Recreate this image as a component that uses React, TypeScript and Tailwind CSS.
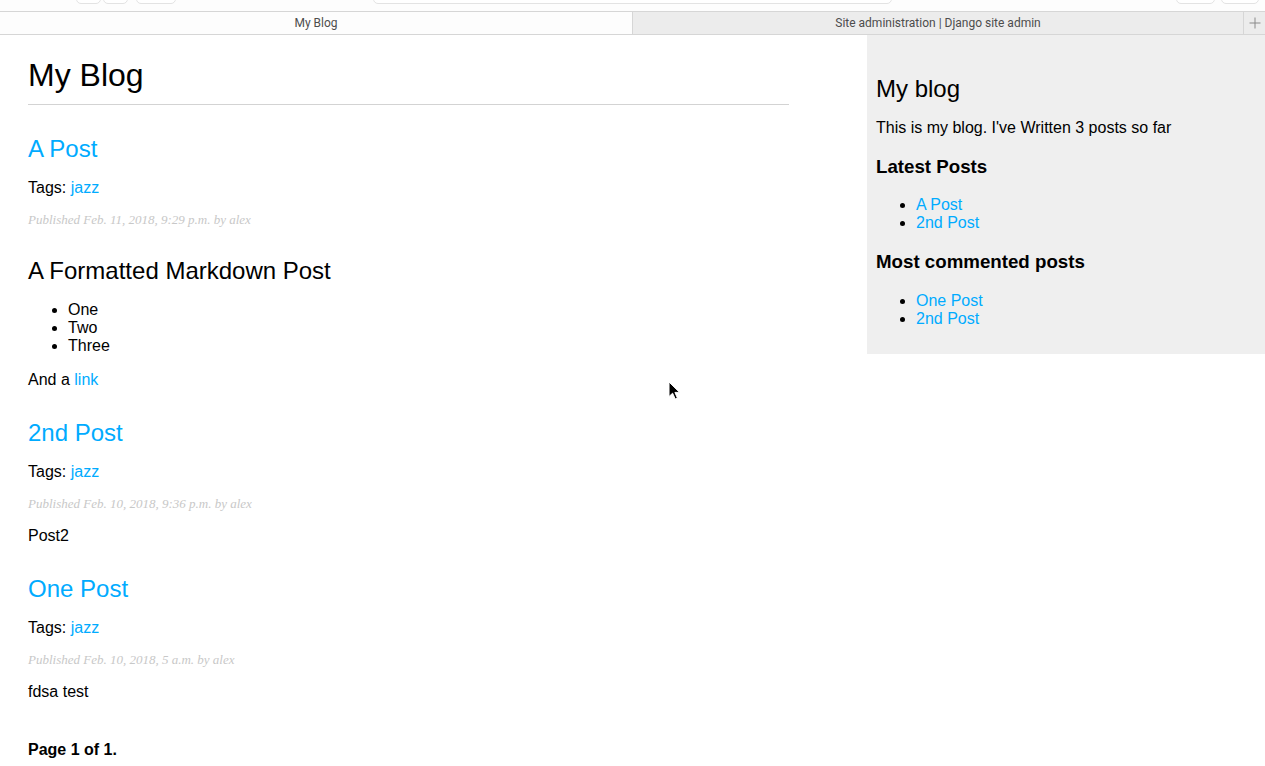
import React from "react";

const sans = { fontFamily: '"Liberation Sans", Arial, sans-serif' };

function Cursor() {
  return (
    <svg
      className="absolute left-[668px] top-[381px]"
      width="14"
      height="20"
      viewBox="0 0 14 20"
    >
      <path
        d="M1 1 L1 15.5 L4.6 12.2 L7.2 18 L9.4 17 L6.9 11.4 L11.6 11.4 Z"
        fill="#000"
        stroke="#fff"
        strokeWidth="1"
        strokeLinejoin="round"
      />
    </svg>
  );
}

function Chrome() {
  return (
    <div className="font-['Roboto',sans-serif]">
      <div className="h-[12px] bg-[#fdfdfd] overflow-hidden flex items-start border-b border-[#d6d6d6]">
        <div className="ml-[76px] -mt-[18px] h-[22px] w-[25px] shrink-0 rounded-[5px] border border-[#e3e3e3] bg-white" />
        <div className="ml-[2px] -mt-[18px] h-[22px] w-[25px] shrink-0 rounded-[5px] border border-[#e3e3e3] bg-white" />
        <div className="ml-[8px] -mt-[18px] h-[22px] w-[40px] shrink-0 rounded-[5px] border border-[#e3e3e3] bg-white" />
        <div className="ml-[197px] -mt-[18px] h-[22px] w-[519px] shrink-0 rounded-[5px] border border-[#e3e3e3] bg-white" />
        <div className="ml-[284px] -mt-[18px] h-[22px] w-[39px] shrink-0 rounded-[5px] border border-[#e3e3e3] bg-white" />
        <div className="ml-[6px] -mt-[18px] h-[22px] w-[38px] shrink-0 rounded-[5px] border border-[#e3e3e3] bg-white" />
      </div>
      <div className="h-[23px] flex border-b border-[#d6d6d6] text-[12px] text-[#4d4d4d]">
        <div className="w-[633px] bg-[#fdfdfd] flex items-center justify-center border-r border-[#d6d6d6]">
          My Blog
        </div>
        <div className="w-[611px] bg-[#ececec] flex items-center justify-center border-r border-[#d6d6d6]">
          Site administration | Django site admin
        </div>
        <div className="flex-1 bg-[#ececec] flex items-center justify-center">
          <svg width="12" height="12" viewBox="0 0 12 12">
            <path d="M6 0.5 V11.5 M0.5 6 H11.5" stroke="#8a8a8a" strokeWidth="1" />
          </svg>
        </div>
      </div>
    </div>
  );
}

function Tags() {
  return (
    <p className="my-4">
      Tags: <a className="text-[#00abff]">jazz</a>
    </p>
  );
}

function DateLine({ text }: { text: string }) {
  return (
    <p className="my-[12px] text-[13px] leading-[14px] italic text-[#c8c8c8] font-['Liberation_Serif',Georgia,serif]">
      {text}
    </p>
  );
}

export default function App() {
  return (
    <div className="relative w-[1265px] h-[766px] overflow-hidden bg-white text-black leading-[normal]" style={sans}>
      <Chrome />
      <div className="flex justify-between items-start">
        <div className="w-[789px] pl-[28px] shrink-0">
          <h1 className="mt-[22px] pb-[10px] border-b border-[#d3d3d3] text-[32px] font-normal">
            My Blog
          </h1>

          <h2 className="mt-[30px] text-[24px] font-normal">
            <a className="text-[#00abff]">A Post</a>
          </h2>
          <Tags />
          <DateLine text="Published Feb. 11, 2018, 9:29 p.m. by alex" />
          <h2 className="mt-[30px] text-[24px] font-normal">A Formatted Markdown Post</h2>
          <ul className="my-4 pl-10 list-disc">
            <li>One</li>
            <li>Two</li>
            <li>Three</li>
          </ul>
          <p className="my-4">
            And a <a className="text-[#00abff]">link</a>
          </p>

          <h2 className="mt-[30px] text-[24px] font-normal">
            <a className="text-[#00abff]">2nd Post</a>
          </h2>
          <Tags />
          <DateLine text="Published Feb. 10, 2018, 9:36 p.m. by alex" />
          <p className="my-4">Post2</p>

          <h2 className="mt-[30px] text-[24px] font-normal">
            <a className="text-[#00abff]">One Post</a>
          </h2>
          <Tags />
          <DateLine text="Published Feb. 10, 2018, 5 a.m. by alex" />
          <p className="my-4">fdsa test</p>

          <div className="mt-[40px] mr-[10px] mb-[10px] font-bold">Page 1 of 1.</div>
        </div>

        <div className="w-[398px] bg-[#efefef] pt-[10px] pb-[10px] pl-[9px] pr-[10px]">
          <h2 className="mt-[30px] text-[24px] font-normal">My blog</h2>
          <p className="my-4">This is my blog. I've Written 3 posts so far</p>
          <h3 className="my-[18.72px] text-[18.72px] font-bold">Latest Posts</h3>
          <ul className="my-4 pl-10 list-disc">
            <li>
              <a className="text-[#00abff]">A Post</a>
            </li>
            <li>
              <a className="text-[#00abff]">2nd Post</a>
            </li>
          </ul>
          <h3 className="my-[18.72px] text-[18.72px] font-bold">Most commented posts</h3>
          <ul className="my-4 pl-10 list-disc">
            <li>
              <a className="text-[#00abff]">One Post</a>
            </li>
            <li>
              <a className="text-[#00abff]">2nd Post</a>
            </li>
          </ul>
        </div>
      </div>
      <Cursor />
    </div>
  );
}
